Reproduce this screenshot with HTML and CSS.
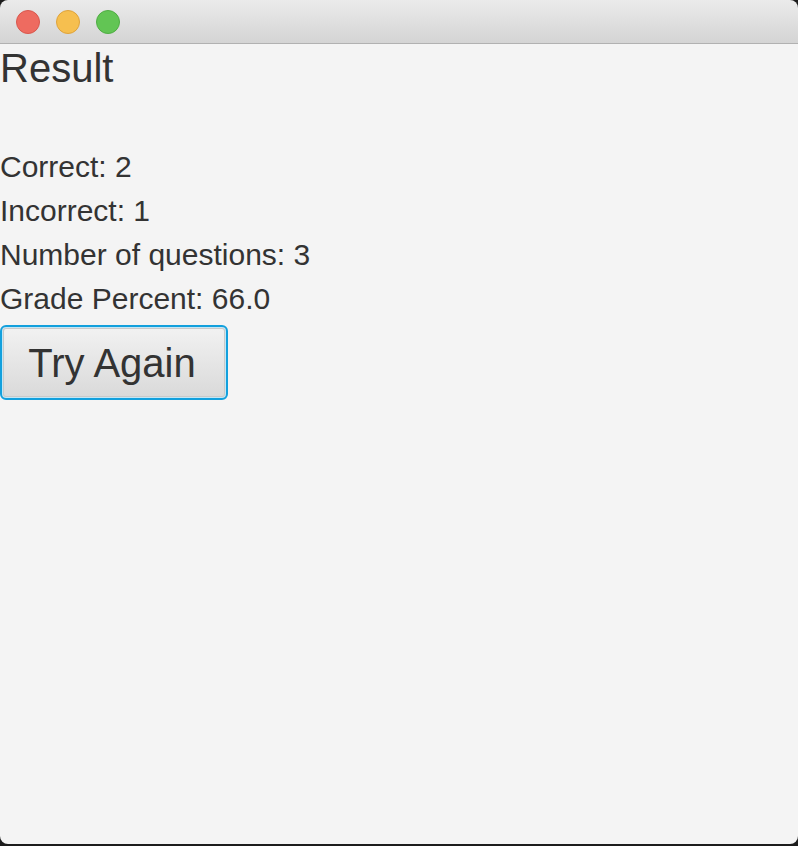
FILE: index.html
```html
<!DOCTYPE html>
<html>
<head>
<meta charset="utf-8">
<link rel="stylesheet" href="styles.css">
</head>
<body>
<div class="window">
  <div class="titlebar">
    <span class="light red"></span>
    <span class="light yellow"></span>
    <span class="light green"></span>
  </div>
  <div class="content">
    <div class="title">Result</div>
    <div class="spacer"></div>
    <div class="line">Correct: 2</div>
    <div class="line">Incorrect: 1</div>
    <div class="line">Number of questions: 3</div>
    <div class="line">Grade Percent: 66.0</div>
    <div class="actions">
      <button class="btn">Try Again</button>
    </div>
  </div>
  <div class="edge"></div>
</div>
</body>
</html>
```

FILE: styles.css
```css
html, body {
  margin: 0;
  padding: 0;
  background: #1c1c1c;
}
.window {
  width: 798px;
  height: 846px;
  display: flex;
  flex-direction: column;
  overflow: hidden;
  font-family: "Liberation Sans", Arial, sans-serif;
  color: #333333;
}
.titlebar {
  height: 43px;
  flex: 0 0 43px;
  border-bottom: 1px solid #b1b1b1;
  background: linear-gradient(#ebebeb, #d4d4d4);
  border-radius: 8px 8px 0 0;
  display: flex;
  align-items: center;
  gap: 16px;
  padding-left: 16px;
  box-sizing: content-box;
}
.light {
  width: 24px;
  height: 24px;
  border-radius: 50%;
  box-sizing: border-box;
}
.red { background: #ee6b60; border: 1px solid #d9574d; }
.yellow { background: #f6bf4f; border: 1px solid #dfa33b; }
.green { background: #62c554; border: 1px solid #4fad43; }
.content {
  flex: 1;
  background: #f4f4f4;
  display: flex;
  flex-direction: column;
  align-items: flex-start;
  border-radius: 0 0 8px 8px;
}
.title {
  font-size: 40px;
  line-height: 48px;
}
.spacer {
  height: 53px;
}
.line {
  font-size: 30px;
  line-height: 44px;
}
.actions {
  margin-top: 4px;
}
.btn {
  display: block;
  box-sizing: border-box;
  width: 228px;
  height: 75px;
  font-family: "Liberation Sans", Arial, sans-serif;
  font-size: 40px;
  color: #333333;
  border: 2px solid #12a0dd;
  border-radius: 6px;
  box-shadow: inset 0 0 0 1px #c4e6f4, inset 0 0 0 2px #c9c9c9;
  background: linear-gradient(#f2f2f2, #d9d9d9);
  padding: 2px 4px 0 0;
  margin: 0;
}
.edge {
  height: 2px;
  flex: 0 0 2px;
  background: #1c1c1c;
}
```
